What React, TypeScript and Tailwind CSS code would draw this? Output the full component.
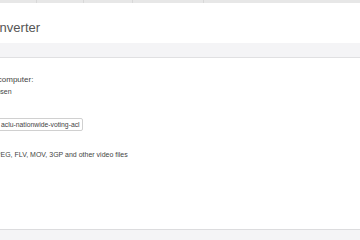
import React from 'react';

const App: React.FC = () => {
  return (
    <div
      className="w-[360px] h-[240px] overflow-hidden bg-white flex flex-col"
      style={{ fontFamily: '"Liberation Sans", Arial, sans-serif' }}
    >
      {/* Nav bar edge */}
      <div className="h-[3px] bg-[#e7e7e7] flex">
        <div className="w-[36px]" />
        <div className="w-[1px] bg-[#d8d8d8]" />
        <div className="w-[46px]" />
        <div className="w-[1px] bg-[#d8d8d8]" />
        <div className="w-[48px]" />
        <div className="w-[1px] bg-[#d8d8d8]" />
        <div className="w-[70px]" />
        <div className="w-[1px] bg-[#d8d8d8]" />
      </div>

      {/* Page header */}
      <div className="h-[40px] pt-[17px] overflow-hidden">
        <h1 className="-ml-[17px] text-[13px] leading-[16px] text-[#555] whitespace-nowrap">Converter</h1>
      </div>
      <div className="h-[15px] bg-[#f4f4f6] border-b border-[#e0e0e2]" />

      {/* Form */}
      <div className="flex-1 pt-[16px] overflow-hidden">
        <p className="-ml-[20px] text-[8px] leading-[11px] text-[#444] whitespace-nowrap">your computer:</p>
        <p className="-ml-[11px] mt-[2px] text-[7px] leading-[9px] text-[#444] whitespace-nowrap">chosen</p>

        <div className="-ml-[4px] mt-[22px] w-[87px] h-[13px] border border-[#d0d0d0] rounded-[2px] flex items-center pl-[4px] overflow-hidden">
          <span className="text-[6.8px] leading-[9px] text-[#444] whitespace-nowrap">aclu-nationwide-voting-acl</span>
        </div>

        <p className="-ml-[10px] mt-[19px] text-[7px] leading-[9px] text-[#444] whitespace-nowrap">
          MPEG, FLV, MOV, 3GP and other video files
        </p>
      </div>

      {/* Footer edge */}
      <div className="h-[11px] bg-[#f4f4f6] border-t border-[#dcdcde]" />
    </div>
  );
};

export default App;
